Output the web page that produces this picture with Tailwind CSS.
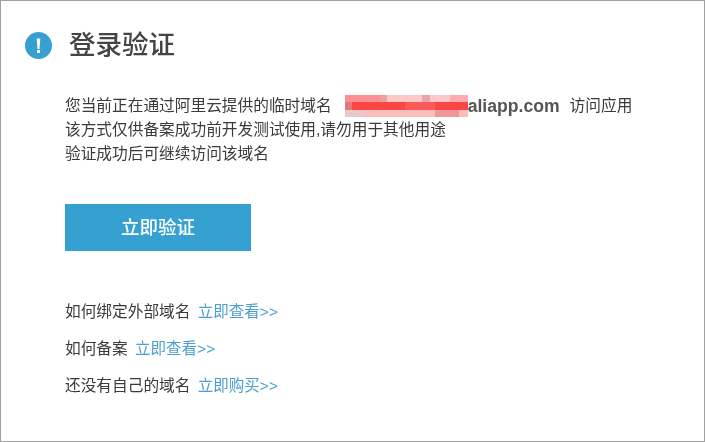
<!DOCTYPE html>
<html lang="zh-CN">
<head>
  <meta charset="UTF-8" />
  <title>登录验证</title>
  <script src="https://cdn.jsdelivr.net/npm/@tailwindcss/browser@4"></script>
</head>
<body class="bg-white font-['Liberation_Sans','Noto_Sans_CJK_SC',sans-serif] overflow-hidden">
  <div class="w-[705px] h-[442px] border border-[#a0a0a0] pl-[24px] pt-[28px] text-[#3a3a3a]">
    <div class="blur-[0.7px]">
      <div class="flex items-center gap-[17px] h-[32px]">
        <div class="w-[27px] h-[27px] rounded-full bg-[#36a1d0] flex items-center justify-center">
          <svg width="27" height="27" viewBox="0 0 27 27"><path d="M11.7 6.5h3.6l-.8 10.5h-2z" fill="#fff"/><rect x="12" y="18" width="3" height="3" fill="#fff"/></svg>
        </div>
        <h1 class="text-[26.5px] leading-none font-medium text-[#444]">登录验证</h1>
      </div>

      <div class="pl-[40px] mt-[33px] text-[15.7px] leading-[24px]">
        <div class="flex items-center whitespace-nowrap">
          <span>您当前正在通过阿里云提供的临时域名</span>
          <svg class="ml-[13px] shrink-0" width="123" height="22" viewBox="0 0 123 22">
            <rect width="123" height="7" fill="#fdc8c8"/>
            <rect width="35" height="7" fill="#fd9090"/>
            <rect x="35" width="7" height="7" fill="#e8a0a0"/>
            <rect x="77" width="8" height="7" fill="#eaa4a8"/>
            <rect x="105" width="18" height="7" fill="#fdacb0"/>
            <rect y="7" width="123" height="8" fill="#fb4646"/>
            <rect y="7" width="7" height="8" fill="#e07878"/>
            <rect x="60" y="7" width="30" height="8" fill="#fb5a5a"/>
            <rect y="15" width="123" height="7" fill="#fbbcbc"/>
            <rect y="15" width="20" height="7" fill="#e8c8c8"/>
            <rect x="90" y="15" width="24" height="7" fill="#f09898"/>
          </svg>
          <span class="font-semibold text-[17.6px] text-[#555]">aliapp.com</span>
          <span class="ml-[10px]">访问应用</span>
        </div>
        <p>该方式仅供备案成功前开发测试使用,请勿用于其他用途</p>
        <p>验证成功后可继续访问该域名</p>
      </div>

      <button class="block ml-[40px] mt-[38px] w-[186px] h-[47px] bg-[#36a1d0] text-white text-[18.5px] font-medium">立即验证</button>

      <div class="pl-[40px] mt-[49px] text-[15.7px] leading-[24px] flex flex-col gap-[13px]">
        <p>如何绑定外部域名 <a class="ml-[3px] text-[15.5px] text-[#4a9fd0]">立即查看&gt;&gt;</a></p>
        <p>如何备案 <a class="ml-[3px] text-[15.5px] text-[#4a9fd0]">立即查看&gt;&gt;</a></p>
        <p>还没有自己的域名 <a class="ml-[3px] text-[15.5px] text-[#4a9fd0]">立即购买&gt;&gt;</a></p>
      </div>
    </div>
  </div>
</body>
</html>
